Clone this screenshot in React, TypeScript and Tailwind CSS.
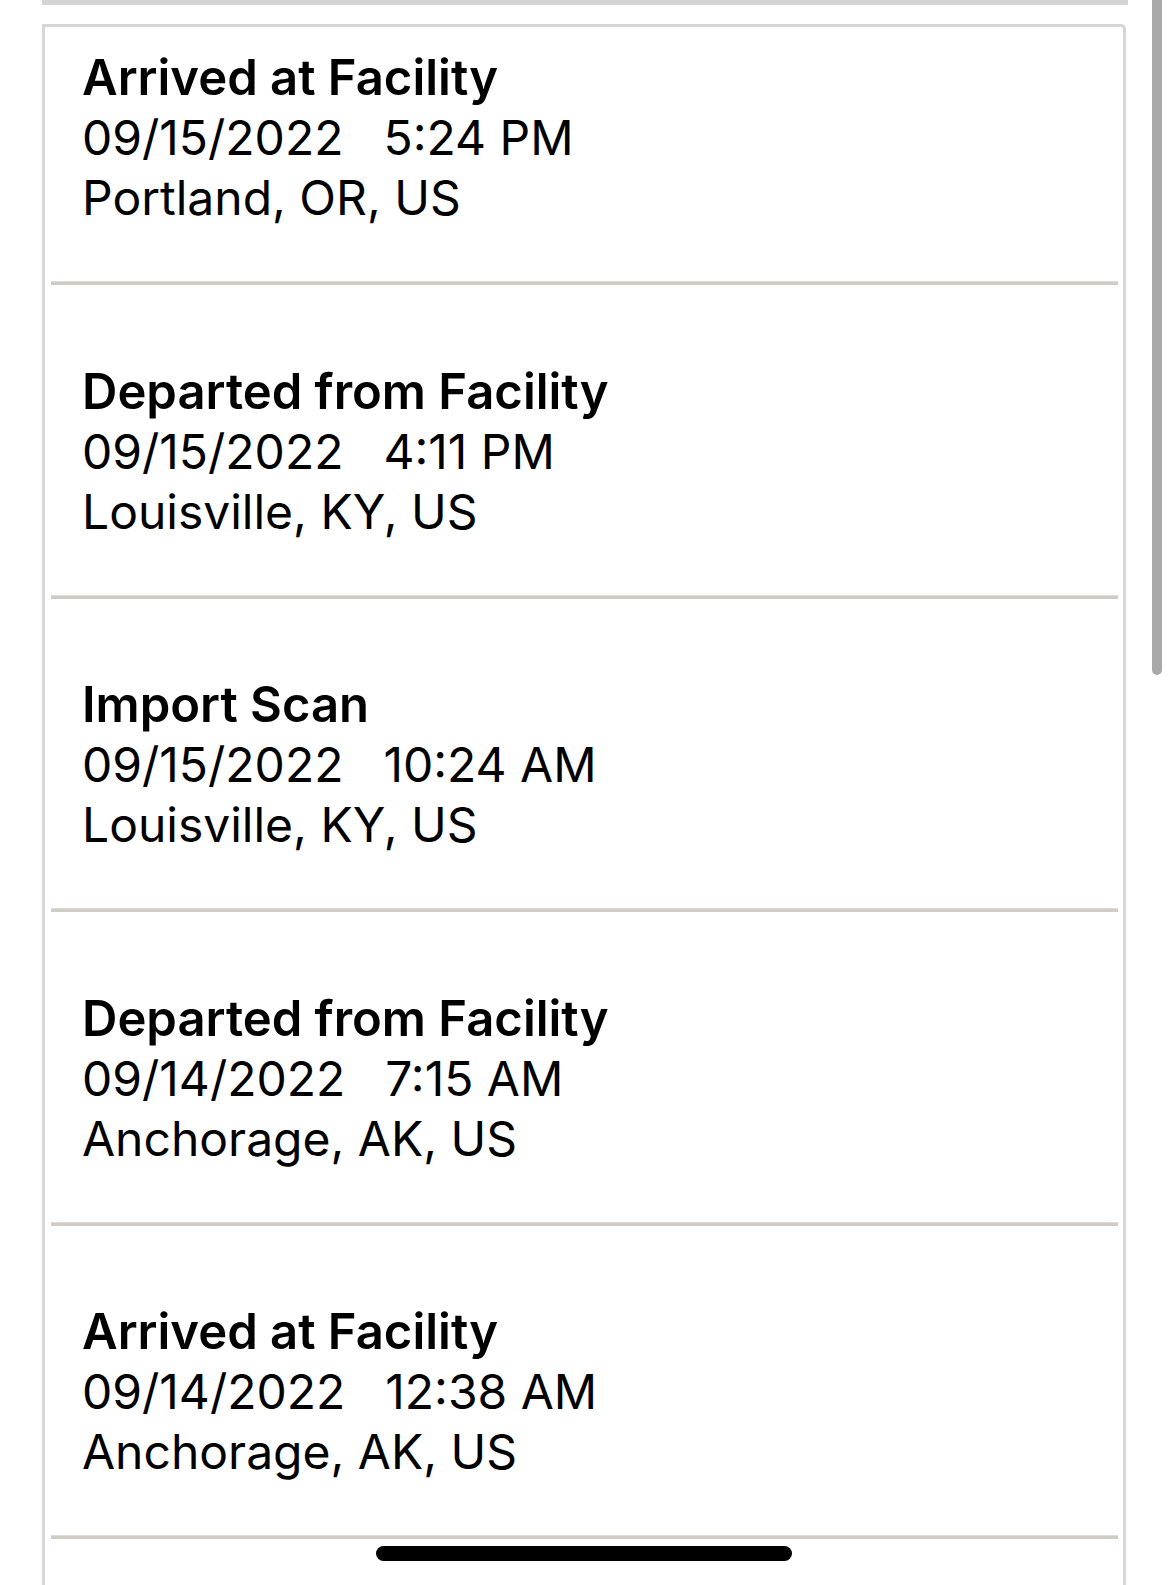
import React from 'react';

type Scan = {
    status: string;
    date: string;
    time: string;
    place: string;
};

const scans: Scan[] = [
    { status: 'Arrived at Facility', date: '09/15/2022', time: '5:24 PM', place: 'Portland, OR, US' },
    { status: 'Departed from Facility', date: '09/15/2022', time: '4:11 PM', place: 'Louisville, KY, US' },
    { status: 'Import Scan', date: '09/15/2022', time: '10:24 AM', place: 'Louisville, KY, US' },
    { status: 'Departed from Facility', date: '09/14/2022', time: '7:15 AM', place: 'Anchorage, AK, US' },
    { status: 'Arrived at Facility', date: '09/14/2022', time: '12:38 AM', place: 'Anchorage, AK, US' },
];

function ScanRow({ scan, first }: { scan: Scan; first: boolean }) {
    return (
        <div>
            <div className={`${first ? 'pt-[21px]' : 'pt-[76.5px]'} pb-[53px] pl-[37px] text-[48px] leading-[60px] text-black`}>
                <p className='font-semibold text-[49px]'>{scan.status}</p>
                <p>
                    <span>{scan.date}</span>
                    <span className='ml-[40px]'>{scan.time}</span>
                </p>
                <p>{scan.place}</p>
            </div>
            {/* row separator */}
            <div className='ml-[6px] mr-[5px] h-[4px] bg-[#d0cbc5] border-t border-[#dedad5]' />
        </div>
    );
}

export default function App() {
    return (
        <div className='relative w-full h-[1585px] bg-white overflow-hidden' style={{ fontFamily: 'Inter, "Noto Sans", sans-serif' }}>
            <div className='ml-[42px] w-[1086px] h-[5px] bg-[#d4d4d4]' />

            <div className='mt-[19px] ml-[42px] w-[1084px] h-[1600px] border-[3px] border-b-0 border-[#d6d6d6] rounded-tr-[5px]'>
                {scans.map((scan, i) => (
                    <ScanRow key={i} scan={scan} first={i === 0} />
                ))}
            </div>

            {/* scroll indicator */}
            <div className='absolute left-[1152px] top-0 w-[10px] h-[675px] rounded-b-full bg-[#a9a9a9]' />

            {/* home indicator */}
            <div className='absolute left-[376px] top-[1546px] w-[416px] h-[15px] rounded-full bg-black' />
        </div>
    );
}
